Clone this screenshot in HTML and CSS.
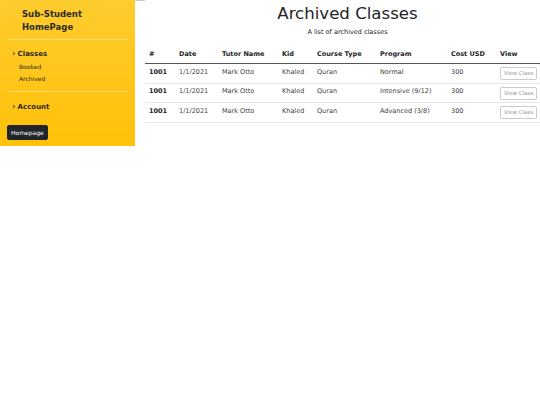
FILE: index.html
```html
<!DOCTYPE html>
<html>
<head>
<meta charset="utf-8">
<link rel="stylesheet" href="styles.css">
</head>
<body>
<div class="layout">
  <aside class="sidebar">
    <div class="brand">Sub-Student<br>HomePage</div>
    <div class="divider"></div>
    <div class="nav-group">
      <div class="nav-head"><span class="chev">&#x203A;</span>Classes</div>
      <div class="nav-item">Booked</div>
      <div class="nav-item">Archived</div>
    </div>
    <div class="divider divider-2"></div>
    <div class="nav-group">
      <div class="nav-head"><span class="chev">&#x203A;</span>Account</div>
    </div>
    <button class="home-btn">Homepage</button>
  </aside>
  <div class="gutter"></div>
  <main class="main">
    <h1 class="title">Archived Classes</h1>
    <p class="subtitle">A list of archived classes</p>
    <table class="table">
      <thead>
        <tr>
          <th class="c-id">#</th>
          <th class="c-date">Date</th>
          <th class="c-tutor">Tutor Name</th>
          <th class="c-kid">Kid</th>
          <th class="c-course">Course Type</th>
          <th class="c-prog">Program</th>
          <th class="c-cost">Cost USD</th>
          <th class="c-view">View</th>
        </tr>
      </thead>
      <tbody>
        <tr>
          <td class="id">1001</td><td>1/1/2021</td><td>Mark Otto</td><td>Khaled</td><td>Quran</td><td>Normal</td><td>300</td><td class="btn-cell"><button class="view-btn">View Class</button></td>
        </tr>
        <tr>
          <td class="id">1001</td><td>1/1/2021</td><td>Mark Otto</td><td>Khaled</td><td>Quran</td><td>Intensive (9/12)</td><td>300</td><td class="btn-cell"><button class="view-btn">View Class</button></td>
        </tr>
        <tr>
          <td class="id">1001</td><td>1/1/2021</td><td>Mark Otto</td><td>Khaled</td><td>Quran</td><td>Advanced (3/8)</td><td>300</td><td class="btn-cell"><button class="view-btn">View Class</button></td>
        </tr>
      </tbody>
    </table>
  </main>
</div>
</body>
</html>
```

FILE: styles.css
```css
* { box-sizing: border-box; }
html, body { margin: 0; padding: 0; background: #fff; }
body {
  font-family: "DejaVu Sans", sans-serif;
  color: #212529;
}
.layout {
  display: flex;
  align-items: flex-start;
}
.sidebar {
  width: 135px;
  height: 146px;
  flex: none;
  background: linear-gradient(to bottom, #ffcc2e 0%, #ffc109 100%);
  padding: 7.5px 7px 0 7px;
  display: flex;
  flex-direction: column;
}
.brand {
  font-weight: bold;
  font-size: 8.5px;
  line-height: 13px;
  padding-left: 15px;
  color: #2b2a1f;
}
.divider {
  height: 1px;
  background: rgba(255,255,255,0.35);
  margin: 5px 0 7px 0;
}
.divider-2 {
  margin: 5px 0 8px 0;
}
.nav-group {
  padding-left: 5px;
  padding-bottom: 1px;
}
.nav-head {
  font-weight: bold;
  font-size: 7px;
  line-height: 14px;
  color: #2b2a1f;
  display: flex;
  align-items: center;
}
.chev {
  font-weight: normal;
  font-size: 9px;
  margin-right: 2px;
  line-height: 1;
}
.nav-item {
  font-size: 6px;
  line-height: 12px;
  padding-left: 7px;
  color: #2b2a1f;
}
.home-btn {
  align-self: flex-start;
  margin-top: 10px;
  background: #212529;
  color: #fff;
  border: 1px solid #212529;
  border-radius: 2px;
  font-family: "DejaVu Sans", sans-serif;
  font-size: 6px;
  padding: 3px 3px;
  line-height: 7px;
}
.gutter {
  width: 10px;
  flex: none;
  border-top: 1px solid #c8c8c8;
}
.main {
  flex: 1;
  min-width: 0;
}
.title {
  margin: 3px 0 0 0;
  padding-left: 10px;
  font-weight: normal;
  font-size: 16.6px;
  line-height: 21px;
  text-align: center;
}
.subtitle {
  margin: 3px 0 0 0;
  padding-left: 10px;
  font-size: 6.5px;
  line-height: 10px;
  text-align: center;
}
.table {
  margin-top: 8px;
  width: 100%;
  border-collapse: collapse;
  font-size: 6.5px;
}
.table th {
  text-align: left;
  font-weight: bold;
  padding: 5px 4px 4px 4px;
  border-bottom: 1.5px solid #555;
  line-height: 9px;
}
.table td {
  padding: 3.5px 4px 4px 4px;
  border-bottom: 1px solid #e6e6e6;
  line-height: 9px;
  vertical-align: top;
  color: #3d3d3d;
}
.table td.id { font-weight: bold; color: #212529; }
.c-id { width: 30px; }
.c-date { width: 43px; }
.c-tutor { width: 60px; }
.c-kid { width: 35px; }
.c-course { width: 63px; }
.c-prog { width: 71px; }
.c-cost { width: 49px; }
.table td.btn-cell { padding: 3px 2px 2.5px 4px; }
.view-btn {
  display: block;
  font-family: "DejaVu Sans", sans-serif;
  font-size: 5.5px;
  color: #999;
  background: #fff;
  border: 1px solid #ccc;
  border-radius: 2px;
  padding: 2px 3px;
  line-height: 7px;
  white-space: nowrap;
}
```
